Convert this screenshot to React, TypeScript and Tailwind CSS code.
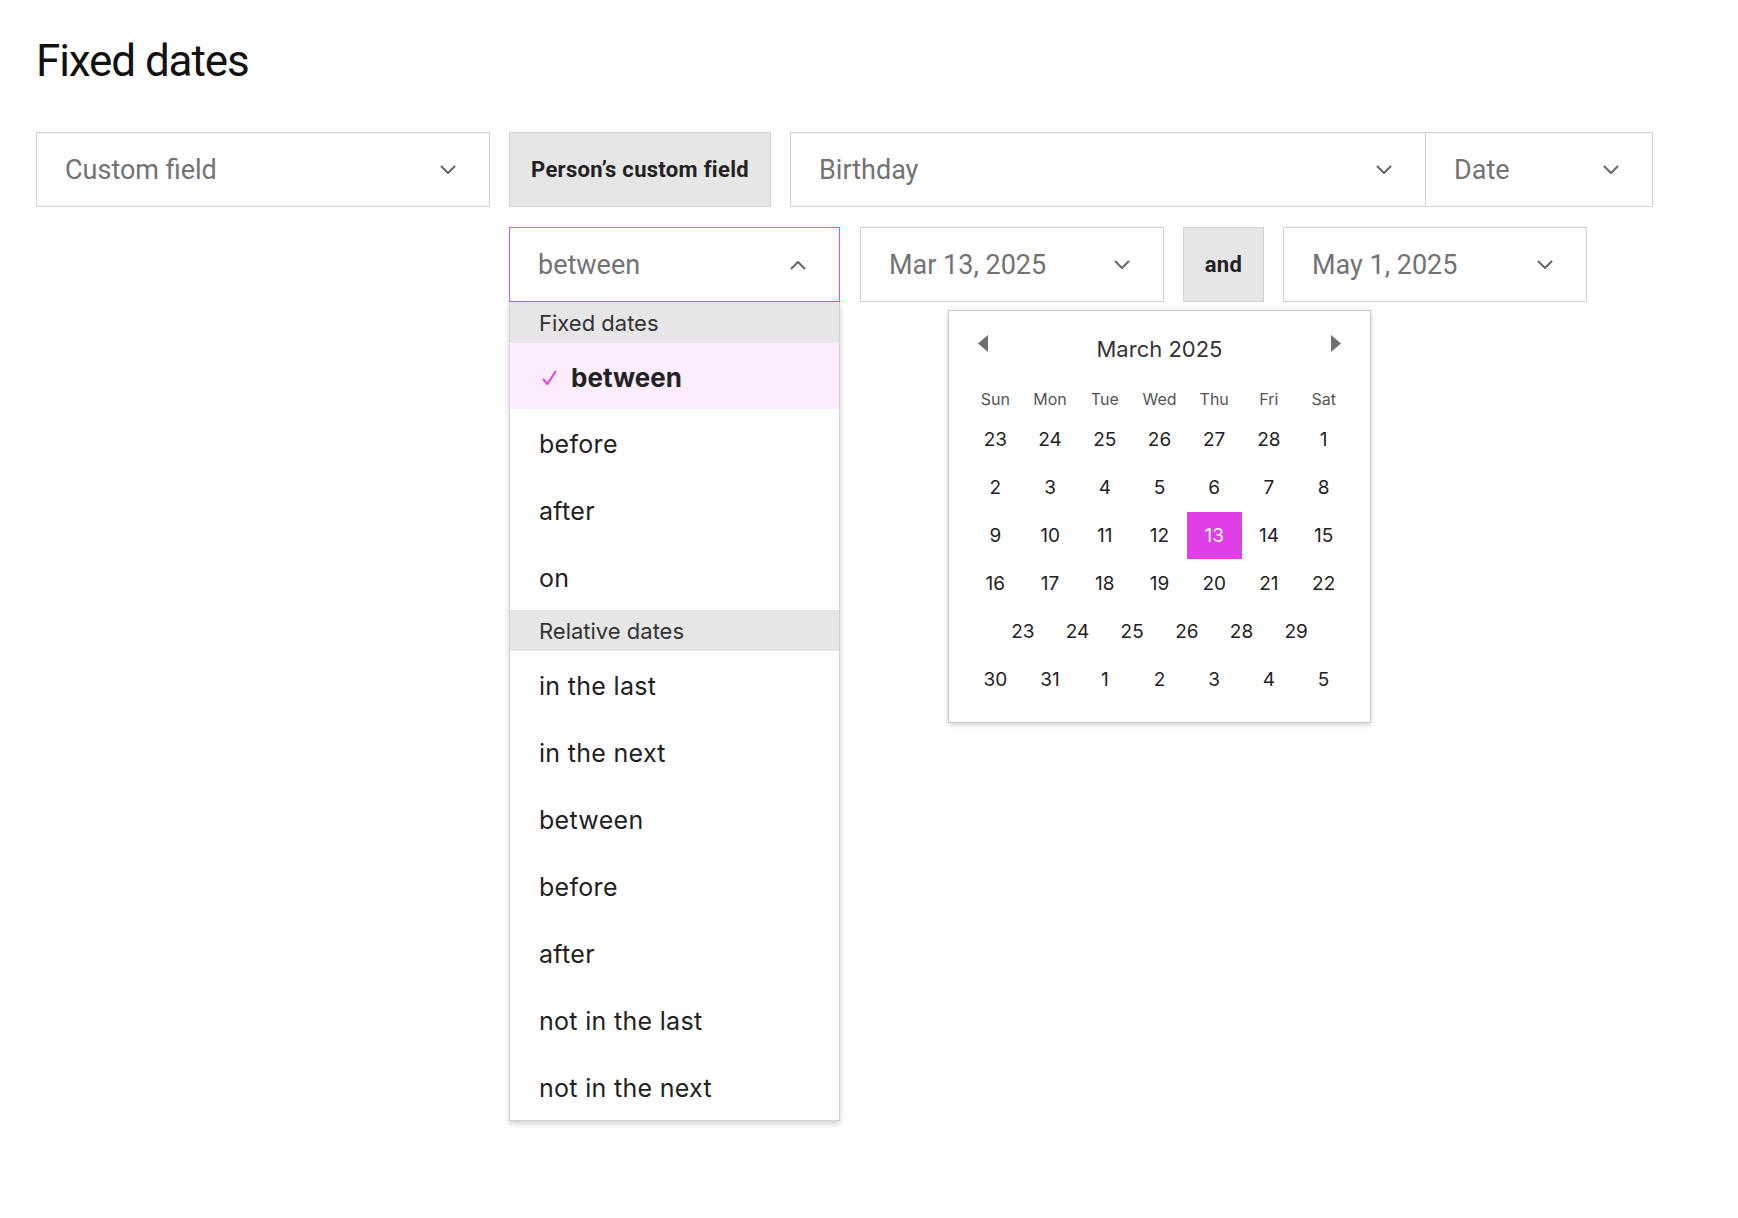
import React from "react";

const roboto = "font-['Roboto','Liberation_Sans',sans-serif]";
const inter = "font-['Inter','Noto_Sans',sans-serif]";

function ChevronDown() {
  return (
    <svg width="16" height="10" viewBox="0 0 16 10" fill="none" className="shrink-0">
      <path d="M1.5 1.5 L8 8 L14.5 1.5" stroke="#666" strokeWidth="2" strokeLinecap="round" strokeLinejoin="round" />
    </svg>
  );
}

function ChevronUp() {
  return (
    <svg width="16" height="10" viewBox="0 0 16 10" fill="none" className="shrink-0">
      <path d="M1.5 8.5 L8 2 L14.5 8.5" stroke="#666" strokeWidth="2" strokeLinecap="round" strokeLinejoin="round" />
    </svg>
  );
}

function Check() {
  return (
    <svg width="15" height="16" viewBox="0 0 15 16" fill="none" className="shrink-0">
      <path d="M1.5 9.5 L5.5 14 L13.5 1.5" stroke="#e23ee8" strokeWidth="2" strokeLinecap="round" strokeLinejoin="round" />
    </svg>
  );
}

const days: (number | null)[][] = [
  [23, 24, 25, 26, 27, 28, 1],
  [2, 3, 4, 5, 6, 7, 8],
  [9, 10, 11, 12, 13, 14, 15],
  [16, 17, 18, 19, 20, 21, 22],
];
const oddRow = [23, 24, 25, 26, 28, 29];
const lastRow = [30, 31, 1, 2, 3, 4, 5];

function Calendar() {
  return (
    <div className={`absolute left-[88px] top-[83px] w-[423px] h-[413px] bg-white border border-[#c9c9c9] shadow-[0_2px_5px_rgba(0,0,0,0.18)] px-[19px] pt-[18px] ${inter}`}>
      <div className="h-[40px] flex items-center justify-between px-[10px]">
        <svg width="10" height="17" viewBox="0 0 10 17" className="-mt-[12px]">
          <path d="M10 0 L0 8.5 L10 17 Z" fill="#6f6f6f" />
        </svg>
        <div className="text-[22px] text-[#333] leading-none">March 2025</div>
        <svg width="10" height="17" viewBox="0 0 10 17" className="-mt-[12px]">
          <path d="M0 0 L10 8.5 L0 17 Z" fill="#6f6f6f" />
        </svg>
      </div>
      <div className="mt-[15px] h-[30px] grid grid-cols-7 w-[383px] text-[16px] leading-[30px] text-[#555] text-center">
        {["Sun", "Mon", "Tue", "Wed", "Thu", "Fri", "Sat"].map((d) => (
          <div key={d}>{d}</div>
        ))}
      </div>
      <div className="mt-[2px] w-[383px] text-[19px] text-[#222]">
        {days.map((row, i) => (
          <div key={i} className="grid grid-cols-7 h-[48px]">
            {row.map((d, j) => (
              <div
                key={j}
                className={
                  d === 13 && i === 2
                    ? "flex items-center justify-center bg-[#e23ee8] text-white h-[47px] pt-[1px]"
                    : "flex items-center justify-center pt-[1px]"
                }
              >
                {d}
              </div>
            ))}
          </div>
        ))}
        <div className="flex justify-center h-[48px]">
          {oddRow.map((d, j) => (
            <div key={j} className="w-[54.67px] flex items-center justify-center pt-[1px]">
              {d}
            </div>
          ))}
        </div>
        <div className="grid grid-cols-7 h-[48px]">
          {lastRow.map((d, j) => (
            <div key={j} className="flex items-center justify-center pt-[1px]">
              {d}
            </div>
          ))}
        </div>
      </div>
    </div>
  );
}

function Dropdown() {
  const fixed = ["before", "after", "on"];
  const relative = ["in the last", "in the next", "between", "before", "after", "not in the last", "not in the next"];
  return (
    <div className={`absolute left-0 right-0 top-full bg-white border-x border-b border-[#d2d2d2] shadow-[0_3px_6px_rgba(0,0,0,0.18)] ${inter}`}>
      <div className="h-[41px] bg-[#e6e6e6] flex items-center pl-[29px] pt-[2px] text-[22px] text-[#333]">Fixed dates</div>
      <div className="h-[66px] bg-[#fcecfd] flex items-center pl-[32px] pt-[3px] gap-[14px]">
        <Check />
        <span className="text-[26px] font-bold text-[#222]">between</span>
      </div>
      {fixed.map((t) => (
        <div key={t} className="h-[67px] flex items-center pl-[29px] pt-[4px] text-[25px] tracking-[0.3px] text-[#222]">
          {t}
        </div>
      ))}
      <div className="h-[41px] bg-[#e6e6e6] flex items-center pl-[29px] pt-[2px] text-[22px] text-[#333]">Relative dates</div>
      {relative.map((t, i) => (
        <div key={i} className="h-[67px] flex items-center pl-[29px] pt-[4px] text-[25px] tracking-[0.3px] text-[#222]">
          {t}
        </div>
      ))}
    </div>
  );
}

function Select({ label, w, extra = "" }: { label: string; w: string; extra?: string }) {
  return (
    <div className={`${w} h-[75px] shrink-0 bg-white border border-[#d2d2d2] flex items-center justify-between pl-[28px] pr-[33px] ${extra}`}>
      <span className="text-[27px] text-[#737373] pt-[2px]">{label}</span>
      <ChevronDown />
    </div>
  );
}

export default function App() {
  return (
    <div className={`min-h-[1218px] bg-white pl-[36px] pt-[39px] ${roboto}`}>
      <h1 className="text-[44px] leading-[44px] text-[#111] tracking-[-1.1px]">Fixed dates</h1>
      <div className="mt-[49px] flex items-center">
        <Select label="Custom field" w="w-[454px]" />
        <div className="ml-[19px] w-[262px] h-[75px] shrink-0 bg-[#e6e6e6] border border-[#d2d2d2] flex items-center justify-center text-[22px] font-bold tracking-[0.3px] text-[#222]">
          Person’s custom field
        </div>
        <div className="ml-[19px] flex">
          <Select label="Birthday" w="w-[636px]" />
          <Select label="Date" w="w-[227px]" extra="border-l-0" />
        </div>
      </div>
      <div className="mt-[20px] ml-[473px] flex items-center">
        <div className="relative w-[331px] h-[75px] shrink-0">
          <div className="h-full bg-white border border-[#e94cf0] flex items-center justify-between pl-[28px] pr-[33px]">
            <span className="text-[27px] text-[#737373] pt-[2px]">between</span>
            <ChevronUp />
          </div>
          <Dropdown />
        </div>
        <div className="ml-[20px] relative">
          <Select label="Mar 13, 2025" w="w-[304px]" />
          <Calendar />
        </div>
        <div className="ml-[19px] w-[81px] h-[75px] shrink-0 bg-[#e6e6e6] border border-[#d2d2d2] flex items-center justify-center text-[22px] font-bold tracking-[0.3px] text-[#222]">
          and
        </div>
        <div className="ml-[19px]">
          <Select label="May 1, 2025" w="w-[304px]" />
        </div>
      </div>
    </div>
  );
}
